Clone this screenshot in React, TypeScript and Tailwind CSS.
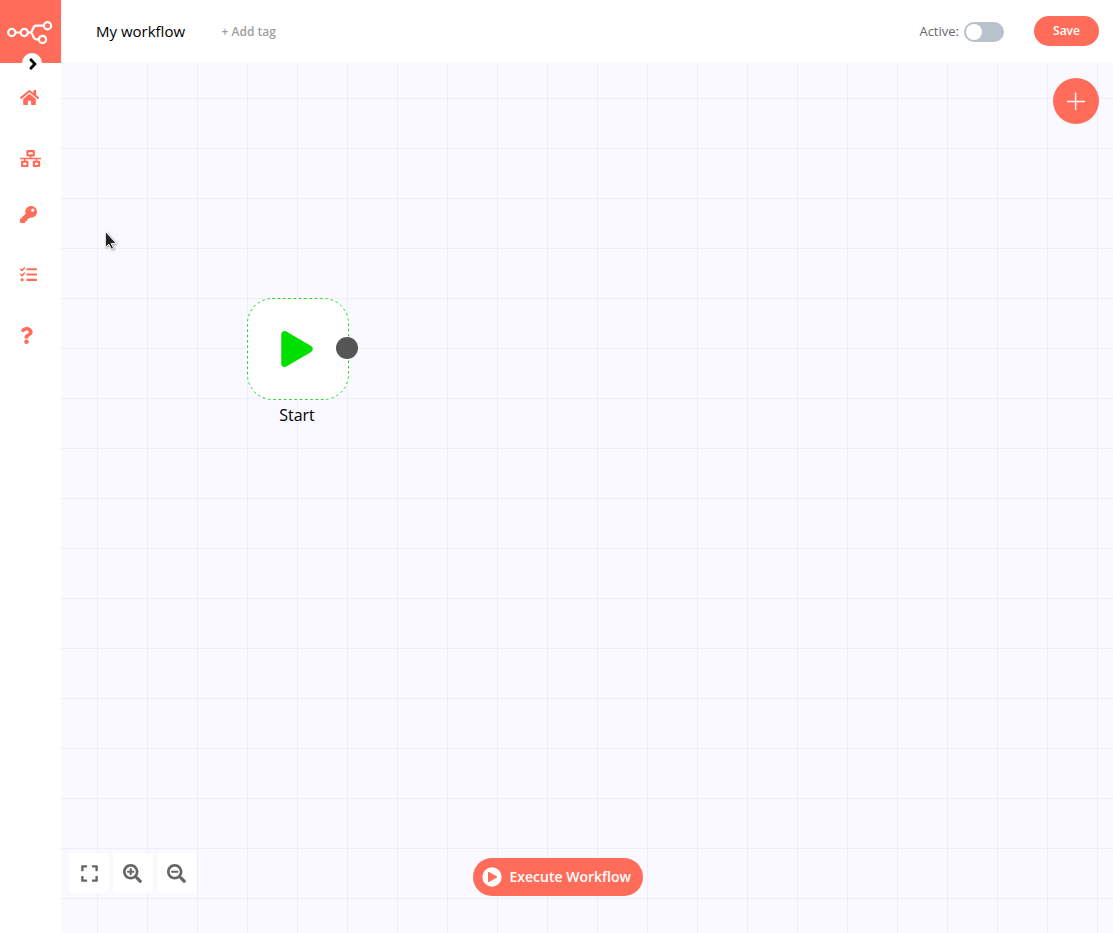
import type { ReactNode } from 'react';
import {
  FaExpand,
  FaHome,
  FaKey,
  FaNetworkWired,
  FaPlay,
  FaQuestion,
  FaSearchMinus,
  FaSearchPlus,
  FaTasks,
  FaAngleRight,
} from 'react-icons/fa';

function Logo() {
  return (
    <svg width="61" height="63" viewBox="-0.3 0 61 63" fill="none" stroke="#fff" strokeWidth="2.2">
      <circle cx="11.5" cy="32.5" r="3.6" />
      <circle cx="24" cy="32.5" r="3.6" />
      <circle cx="47.2" cy="25.7" r="3.6" />
      <circle cx="42.2" cy="39.4" r="3.6" />
      <path d="M15.3 32.5h5.2M27.6 32.5h2c3.7 0 1.9-6.8 6.3-6.8h7.6M29.6 32.5c3.8 0 2.4 6.9 6.6 6.9h2.2" />
    </svg>
  );
}

function Sidebar() {
  return (
    <aside className="flex w-[61px] shrink-0 flex-col bg-white text-[#ff6d5a]">
      <div className="relative h-[63px] bg-[#ff6d5a]">
        <Logo />
        <button className="absolute top-[53px] left-[22px] flex size-5 items-center justify-center rounded-full bg-white text-black">
          <FaAngleRight className="mt-[2px] ml-[2px] h-[18px] w-auto" />
        </button>
      </div>
      <nav className="flex flex-col pl-5">
        <a className="flex h-[65px] items-center pt-1"><FaHome className="h-[17px] w-[19px]" /></a>
        <a className="flex h-[61px] items-center"><FaNetworkWired className="h-[17px] w-[21.25px]" /></a>
        <a className="flex h-[51px] items-center"><FaKey className="size-[17px]" /></a>
        <a className="flex h-[69px] items-center"><FaTasks className="size-[17px]" /></a>
        <a className="flex h-[53px] items-center"><FaQuestion className="h-[17px] w-[13px]" /></a>
      </nav>
    </aside>
  );
}

function Header() {
  return (
    <header className="flex h-[63px] shrink-0 items-center bg-white pr-[14px] pl-[35px]">
      <h1 className="mb-[2px] text-[15px] leading-5 text-black">My workflow</h1>
      <button className="ml-[36.5px] text-[12px] leading-5 font-semibold text-[#a0a0a0]">+ Add tag</button>
      <div className="ml-auto flex items-center">
        <span className="mb-px text-[13px] leading-5 text-[#68686c]">Active:</span>
        <button className="mt-px ml-[5px] flex h-5 w-10 items-center rounded-full bg-[#b8c2cc] pl-0.5">
          <span className="size-4 rounded-full bg-white" />
        </button>
        <button className="mb-px ml-[30px] h-[30px] w-[65px] rounded-full bg-[#ff6d5a] text-[12px] font-semibold text-white">
          Save
        </button>
      </div>
    </header>
  );
}

function StartNode() {
  return (
    <div className="absolute top-[235px] left-[186px] w-[102px]">
      <div className="relative flex h-[102px] items-center justify-center">
        <svg className="absolute inset-0" width="102" height="102">
          <rect x="0.5" y="0.5" width="101" height="101" rx="25" fill="#fff" stroke="#00dd00" strokeDasharray="2.3 3" />
        </svg>
        <FaPlay className="relative mr-[2px] h-9 w-8 text-[#00e000]" />
        <span className="absolute top-[39px] left-[89px] size-[22px] rounded-full bg-[#555555]" />
      </div>
      <p className="mt-[3px] pr-[2px] text-center text-[16px] leading-6 text-black">Start</p>
    </div>
  );
}

function ZoomButton({ children }: { children: ReactNode }) {
  return (
    <button className="flex size-10 items-center justify-center rounded-[3px] bg-white text-[#666666]">{children}</button>
  );
}

function Canvas() {
  return (
    <main className="relative flex flex-1 flex-col justify-between bg-[#faf9ff] bg-[linear-gradient(to_right,#efedfc_1px,transparent_1px),linear-gradient(to_bottom,#efedfc_1px,transparent_1px)] bg-[size:50px_50px] bg-[position:36px_35px]">
      <StartNode />
      <svg className="absolute top-[167px] left-[42px]" width="16" height="22" viewBox="0 0 16 22">
        <path
          d="M2.4 1.4v16l3.5-3.2 2.5 5 2.2-1-2.4-4.8h5z"
          fill="#222"
          stroke="#fff"
          strokeWidth="0.9"
          className="drop-shadow-[1px_1px_1px_rgba(0,0,0,0.35)]"
        />
      </svg>
      <div className="flex justify-end pt-[15px] pr-[14px]">
        <button className="flex size-[46px] items-center justify-center rounded-full bg-[#ff6d5a]">
          <svg width="18" height="18" viewBox="0 0 18 18" stroke="#fff" strokeWidth="1.4">
            <path d="M8.6 0.4v17.6M0 9.5h18" />
          </svg>
        </button>
      </div>
      <div className="flex items-end pb-[37px] pl-2">
        <div className="mb-[3px] flex gap-1">
          <ZoomButton><FaExpand className="h-[19px] w-[17px]" /></ZoomButton>
          <ZoomButton><FaSearchPlus className="mr-px size-[19px]" /></ZoomButton>
          <ZoomButton><FaSearchMinus className="mr-px size-[19px]" /></ZoomButton>
        </div>
        <button className="ml-[276px] flex h-[38px] w-[170px] items-center gap-2 rounded-full bg-[#ff6d5a] pl-[9px] text-[14px] font-semibold whitespace-nowrap text-white">
          <svg className="shrink-0" width="20" height="20" viewBox="0 0 20 20">
            <circle cx="10" cy="10" r="9.7" fill="#fff" />
            <path d="M6.6 5.5v9l8-4.5z" fill="#ff6d5a" stroke="#ff6d5a" strokeWidth="1.2" strokeLinejoin="round" />
          </svg>
          <span className="-ml-[0.5px] mb-px">Execute Workflow</span>
        </button>
      </div>
    </main>
  );
}

export default function App() {
  return (
    <div className="flex h-[933px] w-[1113px] overflow-hidden font-['Open_Sans',sans-serif]">
      <Sidebar />
      <div className="flex min-w-0 flex-1 flex-col">
        <Header />
        <Canvas />
      </div>
    </div>
  );
}
